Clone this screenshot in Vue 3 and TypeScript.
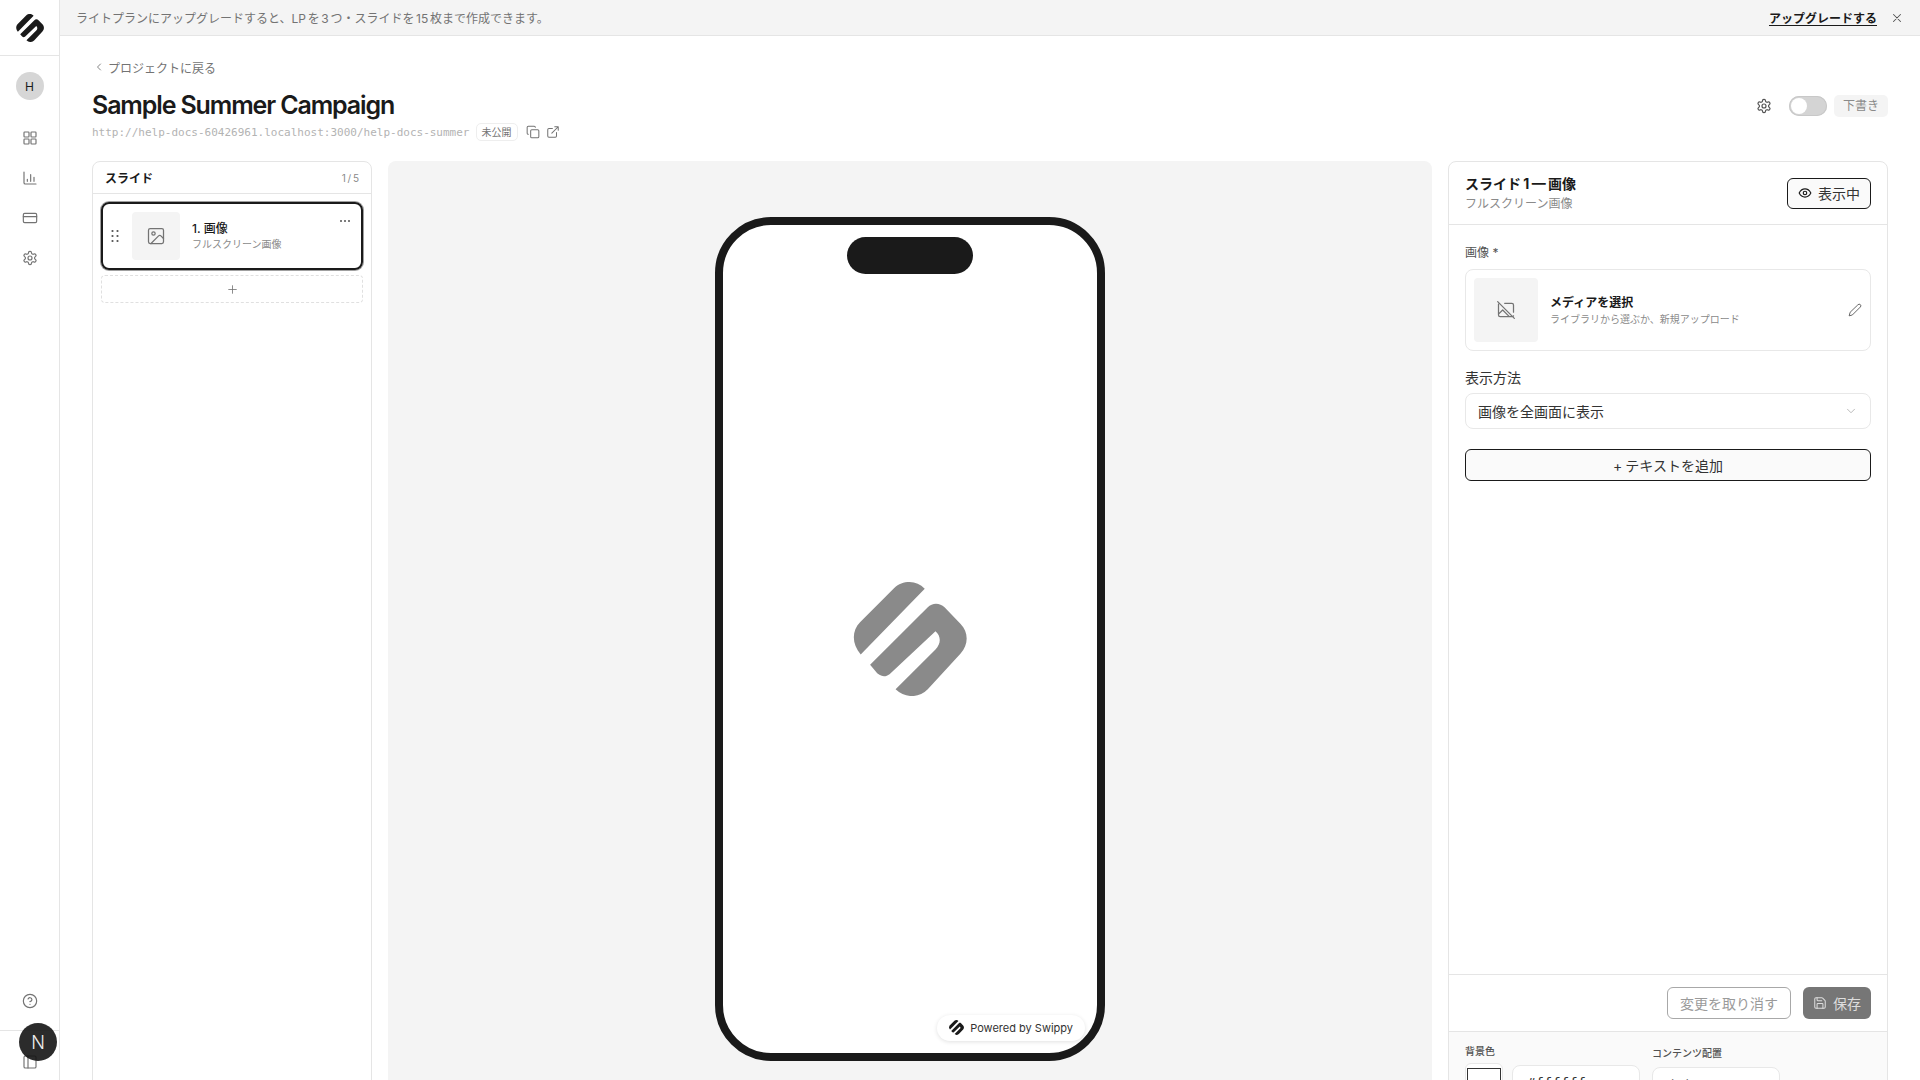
<script setup lang="ts">
// logo traced from the reference, coordinates in a 338x340 box
const logoBar = 'M313 85C300 72 285 65 268 65C250 65 235 70 222 83L120 185C95 210 95 250 122 281Z'
const logoHook = 'M150 312L322 140C335 126 358 126 372 140L420 190C444 214 444 252 420 278L322 385C295 412 255 412 226 385L345 266C362 250 362 226 345 212L208 340C195 350 178 348 165 330Z'
const gear = 'M12.22 2h-.44a2 2 0 0 0-2 2v.18a2 2 0 0 1-1 1.73l-.43.25a2 2 0 0 1-2 0l-.15-.08a2 2 0 0 0-2.73.73l-.22.38a2 2 0 0 0 .73 2.73l.15.1a2 2 0 0 1 1 1.72v.51a2 2 0 0 1-1 1.74l-.15.09a2 2 0 0 0-.73 2.73l.22.38a2 2 0 0 0 2.73.73l.15-.08a2 2 0 0 1 2 0l.43.25a2 2 0 0 1 1 1.73V20a2 2 0 0 0 2 2h.44a2 2 0 0 0 2-2v-.18a2 2 0 0 1 1-1.73l.43-.25a2 2 0 0 1 2 0l.15.08a2 2 0 0 0 2.73-.73l.22-.39a2 2 0 0 0-.73-2.73l-.15-.08a2 2 0 0 1-1-1.74v-.5a2 2 0 0 1 1-1.74l.15-.09a2 2 0 0 0 .73-2.73l-.22-.38a2 2 0 0 0-2.73-.73l-.15.08a2 2 0 0 1-2 0l-.43-.25a2 2 0 0 1-1-1.73V4a2 2 0 0 0-2-2z'
</script>

<template>
  <div class="app">
    <aside class="sidebar">
      <div class="side-logo">
        <svg class="logo-dark" width="28" height="28" viewBox="100 65 338 340"><path :d="logoBar" /><path :d="logoHook" /></svg>
      </div>
      <div class="side-nav">
        <div class="avatar">H</div>
        <svg class="nav-icon" viewBox="0 0 24 24"><rect x="3" y="3" width="7.5" height="7.5" rx="1" /><rect x="13.5" y="3" width="7.5" height="7.5" rx="1" /><rect x="3" y="13.5" width="7.5" height="7.5" rx="1" /><rect x="13.5" y="13.5" width="7.5" height="7.5" rx="1" /></svg>
        <svg class="nav-icon" viewBox="0 0 24 24"><path d="M3 3v16a2 2 0 0 0 2 2h16M8 17v-3M13 17V7M18 17v-6" /></svg>
        <svg class="nav-icon" viewBox="0 0 24 24"><rect x="2" y="5" width="20" height="14" rx="2" /><path d="M2 10h20" /></svg>
        <svg class="nav-icon" viewBox="0 0 24 24"><path :d="gear" /><circle cx="12" cy="12" r="3" /></svg>
      </div>
      <div class="side-help">
        <svg class="nav-icon" viewBox="0 0 24 24"><circle cx="12" cy="12" r="10" /><path d="M9.1 9a3 3 0 0 1 5.8 1c0 2-3 3-3 3M12 17h.01" /></svg>
      </div>
      <div class="side-foot">
        <svg class="nav-icon" viewBox="0 0 24 24"><rect x="3" y="3" width="18" height="18" rx="2" /><path d="M9 3v18" /></svg>
      </div>
      <div class="dev-badge">N</div>
    </aside>

    <div class="column">
      <div class="banner">
        <span class="banner-text">ライトプランにアップグレードすると、LP を 3 つ・スライドを 15 枚まで作成できます。</span>
        <div class="banner-right">
          <a class="upgrade">アップグレードする</a>
          <svg class="close" viewBox="0 0 24 24"><path d="M18 6 6 18M6 6l12 12" /></svg>
        </div>
      </div>

      <main class="main">
        <a class="back">
          <svg viewBox="0 0 24 24"><path d="m15 18-6-6 6-6" /></svg>
          プロジェクトに戻る
        </a>
        <div class="head">
          <div>
            <h1>Sample Summer Campaign</h1>
            <div class="url-row">
              <span class="url">http://help-docs-60426961.localhost:3000/help-docs-summer</span>
              <span class="tag">未公開</span>
              <svg class="url-icon copy" viewBox="0 0 24 24"><rect x="8" y="8" width="14" height="14" rx="2" /><path d="M4 16c-1.1 0-2-.9-2-2V4c0-1.1.9-2 2-2h10c1.1 0 2 .9 2 2" /></svg>
              <svg class="url-icon" viewBox="0 0 24 24"><path d="M15 3h6v6M10 14 21 3M18 13v6a2 2 0 0 1-2 2H5a2 2 0 0 1-2-2V8a2 2 0 0 1 2-2h6" /></svg>
            </div>
          </div>
          <div class="head-right">
            <svg class="head-gear" viewBox="0 0 24 24"><path :d="gear" /><circle cx="12" cy="12" r="3" /></svg>
            <span class="toggle"><span class="knob"></span></span>
            <span class="draft">下書き</span>
          </div>
        </div>

        <div class="panels">
          <section class="slides">
            <div class="slides-head">
              <strong>スライド</strong>
              <span>1 / 5</span>
            </div>
            <div class="slides-body">
              <div class="slide-item">
                <svg class="drag" viewBox="0 0 10 16"><circle cx="2.5" cy="3" r="1.1" /><circle cx="7.5" cy="3" r="1.1" /><circle cx="2.5" cy="8" r="1.1" /><circle cx="7.5" cy="8" r="1.1" /><circle cx="2.5" cy="13" r="1.1" /><circle cx="7.5" cy="13" r="1.1" /></svg>
                <div class="slide-thumb">
                  <svg viewBox="0 0 24 24"><rect x="3" y="3" width="18" height="18" rx="2" /><circle cx="9" cy="9" r="2" /><path d="m21 15-3.1-3.1a2 2 0 0 0-2.8 0L6 21" /></svg>
                </div>
                <div class="slide-text">
                  <div class="slide-title">1. 画像</div>
                  <div class="slide-sub">フルスクリーン画像</div>
                </div>
                <svg class="more" viewBox="0 0 12 4"><circle cx="2" cy="2" r="1" /><circle cx="6" cy="2" r="1" /><circle cx="10" cy="2" r="1" /></svg>
              </div>
              <div class="slide-add">
                <svg viewBox="0 0 24 24"><path d="M5 12h14M12 5v14" /></svg>
              </div>
            </div>
          </section>

          <section class="stage">
            <div class="phone">
              <div class="notch"></div>
              <svg class="phone-logo" viewBox="100 65 338 340"><path :d="logoBar" /><path :d="logoHook" /></svg>
              <div class="powered">
                <svg class="logo-dark" width="15" height="15" viewBox="100 65 338 340"><path :d="logoBar" /><path :d="logoHook" /></svg>
                Powered by Swippy
              </div>
            </div>
          </section>

          <section class="editor">
            <div class="editor-head">
              <div>
                <div class="editor-title">スライド 1 — 画像</div>
                <div class="editor-sub">フルスクリーン画像</div>
              </div>
              <button class="outline-btn view-btn">
                <svg viewBox="0 0 24 24"><path d="M2 12s3.6-7 10-7 10 7 10 7-3.6 7-10 7-10-7-10-7z" /><circle cx="12" cy="12" r="3" /></svg>
                表示中
              </button>
            </div>
            <div class="editor-body">
              <label class="small-label">画像 *</label>
              <div class="media">
                <div class="media-thumb">
                  <svg viewBox="0 0 24 24"><path d="m2 2 20 20M10.4 4H19a2 2 0 0 1 2 2v8.6M21 19a2 2 0 0 1-2 1H5a2 2 0 0 1-2-2V5M3 17l5-5 8 8" /></svg>
                </div>
                <div class="media-text">
                  <div class="media-title">メディアを選択</div>
                  <div class="media-sub">ライブラリから選ぶか、新規アップロード</div>
                </div>
                <svg class="pencil" viewBox="0 0 24 24"><path d="M17 3a2.85 2.83 0 1 1 4 4L7.5 20.5 2 22l1.5-5.5Z" /></svg>
              </div>
              <label class="field-label">表示方法</label>
              <div class="select">
                <span>画像を全画面に表示</span>
                <svg viewBox="0 0 24 24"><path d="m6 9 6 6 6-6" /></svg>
              </div>
              <button class="outline-btn add-text">+ テキストを追加</button>
            </div>
            <div class="editor-foot">
              <button class="revert">変更を取り消す</button>
              <button class="save">
                <svg viewBox="0 0 24 24"><path d="M15.2 3a2 2 0 0 1 1.4.6l3.8 3.8a2 2 0 0 1 .6 1.4V19a2 2 0 0 1-2 2H5a2 2 0 0 1-2-2V5a2 2 0 0 1 2-2z" /><path d="M17 21v-7a1 1 0 0 0-1-1H8a1 1 0 0 0-1 1v7M7 3v4a1 1 0 0 0 1 1h7" /></svg>
                保存
              </button>
            </div>
            <div class="editor-style">
              <div class="style-col">
                <label>背景色</label>
                <div class="color-row">
                  <span class="swatch"><span></span></span>
                  <span class="color-input">#ffffff</span>
                </div>
              </div>
              <div class="style-col align-col">
                <label>コンテンツ配置</label>
                <div class="align-select">左右</div>
              </div>
            </div>
          </section>
        </div>
      </main>
    </div>
  </div>
</template>

<style>
html, body {
  margin: 0;
  overflow: hidden;
  background: #fff;
}
</style>

<style scoped>
.app {
  display: flex;
  height: 100vh;
  overflow: hidden;
  font-family: Inter, "Noto Sans CJK JP", sans-serif;
  color: #1a1a1a;
  font-size: 12px;
}

svg {
  fill: none;
  stroke: currentColor;
  stroke-width: 2;
  stroke-linecap: round;
  stroke-linejoin: round;
  flex-shrink: 0;
}

.logo-dark {
  fill: #1a1a1a;
  stroke: none;
}

/* sidebar */
.sidebar {
  position: relative;
  width: 59px;
  flex-shrink: 0;
  border-right: 1px solid #e5e5e5;
  display: flex;
  flex-direction: column;
  align-items: center;
}

.side-logo {
  width: 100%;
  height: 55px;
  border-bottom: 1px solid #e5e5e5;
  display: flex;
  align-items: center;
  justify-content: center;
}

.side-nav {
  flex: 1;
  display: flex;
  flex-direction: column;
  align-items: center;
  padding-top: 16px;
}

.avatar {
  width: 28px;
  height: 28px;
  border-radius: 50%;
  background: #d6d6d6;
  display: flex;
  align-items: center;
  justify-content: center;
  font-size: 12px;
  font-weight: 400;
  margin-bottom: 18px;
}

.nav-icon {
  width: 16px;
  height: 16px;
  padding: 12px;
  color: #737373;
  stroke-width: 1.75;
}

.side-help {
  height: 49px;
}

.side-foot {
  width: 100%;
  height: 50px;
  box-sizing: border-box;
  border-top: 1px solid #e5e5e5;
  display: flex;
  align-items: center;
  justify-content: center;
  padding-top: 12px;
}

.dev-badge {
  position: absolute;
  left: 19px;
  bottom: 19px;
  width: 38px;
  height: 38px;
  border-radius: 50%;
  background: rgba(20, 20, 20, 0.9);
  color: #eee;
  display: flex;
  align-items: center;
  justify-content: center;
  font-size: 18px;
  font-weight: 300;
}

/* banner */
.column {
  flex: 1;
  min-width: 0;
  display: flex;
  flex-direction: column;
}

.banner {
  height: 35px;
  flex-shrink: 0;
  background: #f4f4f4;
  border-bottom: 1px solid #e5e5e5;
  padding: 0 16px;
  display: flex;
  align-items: center;
  justify-content: space-between;
  color: #737373;
}

.banner-text {
  word-spacing: -1.7px;
}

.banner-right {
  display: flex;
  align-items: center;
  gap: 13px;
}

.upgrade {
  color: #1a1a1a;
  font-weight: 700;
  text-decoration: underline;
  text-underline-offset: 2px;
}

.close {
  width: 14px;
  height: 14px;
  color: #525252;
  stroke-width: 1.75;
}

/* main */
.main {
  height: 1080px;
  flex-shrink: 0;
  box-sizing: border-box;
  padding: 22px 32px 0;
  display: flex;
  flex-direction: column;
}

.back {
  display: flex;
  align-items: center;
  gap: 3px;
  height: 18px;
  color: #737373;
  padding-left: 1px;
}

.back svg {
  width: 12px;
  height: 12px;
  stroke-width: 1.75;
}

.head {
  display: flex;
  align-items: flex-start;
  justify-content: space-between;
  margin-top: 11px;
  margin-bottom: 20px;
}

h1 {
  margin: 0;
  font-size: 25px;
  line-height: 36px;
  font-weight: 600;
  letter-spacing: -0.045em;
}

.url-row {
  display: flex;
  align-items: center;
  height: 18px;
}

.url {
  font-family: "DejaVu Sans Mono", monospace;
  font-size: 11px;
  color: #b3b3b3;
}

.tag {
  margin-left: 6px;
  padding: 0 5px;
  border: 1px solid #eee;
  border-radius: 5px;
  font-size: 10px;
  line-height: 16px;
  color: #737373;
}

.url-icon {
  width: 14px;
  height: 14px;
  margin-left: 6px;
  color: #737373;
  stroke-width: 1.75;
}

.url-icon.copy {
  margin-left: 8px;
}

.head-right {
  height: 38px;
  display: flex;
  align-items: center;
  gap: 7px;
}

.head-gear {
  width: 16px;
  height: 16px;
  color: #525252;
  stroke-width: 1.75;
  margin-right: 10px;
}

.toggle {
  position: relative;
  width: 38px;
  height: 20px;
  border-radius: 10px;
  background: #d4d4d4;
  box-shadow: inset 0 0 0 1px #c8c8c8;
}

.knob {
  position: absolute;
  left: 2px;
  top: 2px;
  width: 16px;
  height: 16px;
  border-radius: 50%;
  background: #fff;
}

.draft {
  background: #f4f4f4;
  color: #8a8a8a;
  border-radius: 5px;
  padding: 0 9px;
  line-height: 22px;
  font-size: 12px;
}

/* panels */
.panels {
  display: flex;
  gap: 16px;
  height: 955px;
  flex-shrink: 0;
}

.slides {
  width: 280px;
  flex-shrink: 0;
  box-sizing: border-box;
  border: 1px solid #e5e5e5;
  border-radius: 8px 8px 0 0;
  display: flex;
  flex-direction: column;
}

.slides-head {
  height: 31px;
  flex-shrink: 0;
  border-bottom: 1px solid #e5e5e5;
  padding: 0 12px;
  display: flex;
  align-items: center;
  justify-content: space-between;
}

.slides-head strong {
  font-weight: 700;
}

.slides-head span {
  font-size: 10px;
  color: #8a8a8a;
  word-spacing: -1px;
}

.slides-body {
  padding: 8px 8px;
  display: flex;
  flex-direction: column;
  gap: 5px;
}

.slide-item {
  position: relative;
  height: 68px;
  box-sizing: border-box;
  border: 2px solid #1a1a1a;
  border-radius: 8px;
  box-shadow: 0 0 0 1px #a0a0a0;
  display: flex;
  align-items: center;
  padding: 0 7px;
}

.drag {
  width: 10px;
  height: 16px;
  fill: #525252;
  stroke: none;
}

.slide-thumb {
  width: 48px;
  height: 48px;
  margin-left: 12px;
  border-radius: 4px;
  background: #f4f4f4;
  color: #737373;
  display: flex;
  align-items: center;
  justify-content: center;
}

.slide-thumb svg {
  width: 20px;
  height: 20px;
  stroke-width: 1.5;
}

.slide-text {
  margin-left: 12px;
}

.slide-title {
  font-size: 12px;
  font-weight: 500;
  line-height: 16px;
}

.slide-sub {
  font-size: 10px;
  line-height: 15px;
  color: #8a8a8a;
}

.more {
  position: absolute;
  right: 10px;
  top: 15px;
  width: 12px;
  height: 4px;
  fill: #525252;
  stroke: none;
}

.slide-add {
  height: 28px;
  box-sizing: border-box;
  border: 1px dashed #e0e0e0;
  border-radius: 4px;
  color: #737373;
  display: flex;
  align-items: center;
  justify-content: center;
}

.slide-add svg {
  width: 13px;
  height: 13px;
  stroke-width: 1.5;
}

.stage {
  flex: 1;
  min-width: 0;
  background: #f4f4f4;
  border-radius: 8px 8px 0 0;
  display: flex;
  align-items: center;
  justify-content: center;
}

.phone {
  position: relative;
  width: 390px;
  height: 844px;
  box-sizing: border-box;
  border: 8px solid #1a1a1a;
  border-radius: 56px;
  background: #fff;
  display: flex;
  align-items: center;
  justify-content: center;
}

.notch {
  position: absolute;
  top: 12px;
  left: 50%;
  transform: translateX(-50%);
  width: 126px;
  height: 37px;
  border-radius: 19px;
  background: #1a1a1a;
}

.phone-logo {
  width: 114px;
  height: 114px;
  fill: #8a8a8a;
  stroke: none;
}

.powered {
  position: absolute;
  right: 12px;
  bottom: 12px;
  height: 26px;
  padding: 0 12px;
  border-radius: 13px;
  background: #fff;
  box-shadow: 0 1px 4px rgba(0, 0, 0, 0.12);
  display: flex;
  align-items: center;
  gap: 6px;
  font-size: 11px;
  color: #333;
}

/* editor */
.editor {
  width: 440px;
  flex-shrink: 0;
  box-sizing: border-box;
  border: 1px solid #e5e5e5;
  border-radius: 8px 8px 0 0;
  display: flex;
  flex-direction: column;
}

.editor-head {
  height: 63px;
  flex-shrink: 0;
  box-sizing: border-box;
  border-bottom: 1px solid #e5e5e5;
  padding: 0 16px;
  display: flex;
  align-items: center;
  justify-content: space-between;
}

.editor-title {
  font-size: 14px;
  font-weight: 700;
  line-height: 18px;
  word-spacing: -1px;
}

.editor-sub {
  margin-top: 3px;
  font-size: 12px;
  line-height: 16px;
  color: #8a8a8a;
}

.outline-btn {
  font: inherit;
  font-size: 14px;
  color: #333;
  background: #fafafa;
  border: 1px solid #1a1a1a;
  border-radius: 6px;
  display: flex;
  align-items: center;
  justify-content: center;
}

.view-btn {
  width: 84px;
  height: 31px;
  gap: 6px;
  padding: 0;
}

.view-btn svg {
  width: 14px;
  height: 14px;
  color: #1a1a1a;
}

.editor-body {
  flex: 1;
  padding: 20px 16px 0;
  display: flex;
  flex-direction: column;
}

.small-label {
  font-size: 12px;
  line-height: 16px;
  color: #525252;
}

.media {
  margin-top: 8px;
  height: 82px;
  box-sizing: border-box;
  border: 1px solid #e8e8e8;
  border-radius: 8px;
  padding: 0 8px;
  display: flex;
  align-items: center;
}

.media-thumb {
  width: 64px;
  height: 64px;
  border-radius: 4px;
  background: #f4f4f4;
  color: #737373;
  display: flex;
  align-items: center;
  justify-content: center;
}

.media-thumb svg {
  width: 20px;
  height: 20px;
  stroke-width: 1.5;
}

.media-text {
  flex: 1;
  margin-left: 12px;
}

.media-title {
  font-size: 12px;
  font-weight: 700;
  line-height: 18px;
}

.media-sub {
  font-size: 10px;
  line-height: 15px;
  color: #8a8a8a;
}

.pencil {
  width: 14px;
  height: 14px;
  color: #525252;
  stroke-width: 1.5;
}

.field-label {
  margin-top: 17px;
  font-size: 14px;
  line-height: 20px;
  color: #333;
}

.select {
  margin-top: 5px;
  height: 36px;
  box-sizing: border-box;
  border: 1px solid #e8e8e8;
  border-radius: 8px;
  padding: 0 12px;
  display: flex;
  align-items: center;
  justify-content: space-between;
  font-size: 14px;
  color: #333;
}

.select svg {
  width: 14px;
  height: 14px;
  color: #b0b0b0;
  stroke-width: 1.5;
}

.add-text {
  margin-top: 20px;
  height: 32px;
  flex-shrink: 0;
  word-spacing: -1px;
}

.editor-foot {
  height: 57px;
  flex-shrink: 0;
  box-sizing: border-box;
  border-top: 1px solid #e5e5e5;
  padding: 0 16px;
  display: flex;
  align-items: center;
  justify-content: flex-end;
  gap: 12px;
}

.revert,
.save {
  font: inherit;
  font-size: 14px;
  height: 32px;
  border-radius: 6px;
  display: flex;
  align-items: center;
  justify-content: center;
  gap: 6px;
  padding: 0;
}

.revert {
  width: 124px;
  background: #fff;
  border: 1px solid #a8a8a8;
  color: #9a9a9a;
}

.save {
  width: 68px;
  background: #767676;
  border: none;
  color: #ddd;
}

.save svg {
  width: 14px;
  height: 14px;
  stroke-width: 1.75;
}

.editor-style {
  height: 84px;
  flex-shrink: 0;
  box-sizing: border-box;
  border-top: 1px solid #e5e5e5;
  background: #fafafa;
  padding: 12px 16px 0;
  display: flex;
  gap: 12px;
}

.style-col label {
  display: block;
  font-size: 10px;
  font-weight: 500;
  line-height: 14px;
  color: #525252;
}

.color-row {
  display: flex;
  align-items: flex-start;
  gap: 9px;
  margin-top: 5px;
}

.swatch {
  width: 38px;
  height: 38px;
  box-sizing: border-box;
  border: 1px solid #e8e8e8;
  border-radius: 6px;
  padding: 4px 1px;
  background: #fff;
}

.swatch span {
  display: block;
  height: 100%;
  border: 1px solid #333;
  box-sizing: border-box;
  background: #fff;
}

.color-input {
  width: 128px;
  height: 38px;
  box-sizing: border-box;
  margin-top: 2px;
  border: 1px solid #e8e8e8;
  border-radius: 8px;
  background: #fff;
  padding: 9px 14px;
  font-family: "DejaVu Sans Mono", monospace;
  font-size: 14px;
  color: #333;
}

.align-col {
  padding-top: 2px;
}

.align-select {
  width: 128px;
  height: 38px;
  box-sizing: border-box;
  margin-top: 7px;
  border: 1px solid #e8e8e8;
  border-radius: 8px;
  background: #fff;
  padding: 7px 14px;
  font-size: 14px;
  color: #333;
}
</style>
